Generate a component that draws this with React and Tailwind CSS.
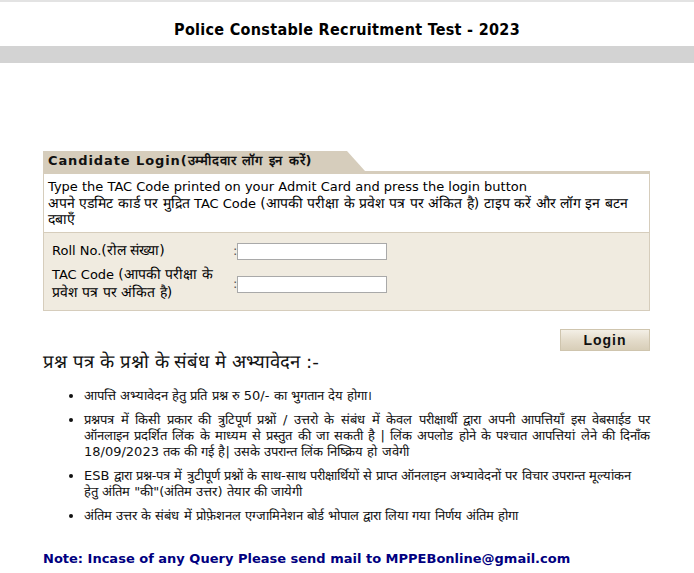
const HI = "text-[14px] leading-[1]";

export default function App() {
  return (
    <div className="w-[694px] min-h-[573px] bg-white font-['DejaVu_Sans',sans-serif] text-black">
      {/* top strip */}
      <div className="h-[2px] bg-[#e3e3e3]" />
      <div className="h-[44px] flex items-center justify-center pt-[12px]">
        <h1 className="font-['DejaVu_Sans_Condensed',sans-serif] font-bold text-[16px] tracking-[0.3px]">
          Police Constable Recruitment Test - 2023
        </h1>
      </div>
      <div className="h-[17px] bg-[#d3d3d3]" />

      <div className="mx-[43px] mt-[88px] w-[607px]">
        {/* tab header */}
        <div className="flex h-[20px]">
          <div className="bg-[#d6cdbc] h-full w-[304px] flex items-center pl-[5px] font-bold text-[13px] tracking-[0.9px] text-[#111]">
            Candidate Login(उम्मीदवार लॉग इन करें)
          </div>
          <svg width="18" height="20" viewBox="0 0 18 20" className="block">
            <polygon points="0,0 0,20 18,20" fill="#d6cdbc" />
          </svg>
        </div>
        <div className="border border-[#d6cdbc] border-t-[3px]">
          <div className="bg-white px-[4px] pt-[5px] text-[13px] leading-[16.5px] h-[58px]">
            <p>Type the TAC Code printed on your Admit Card and press the login button</p>
            <p>
              <span className={HI}>अपने एडमिट कार्ड पर मुद्रित</span> TAC Code{" "}
              <span className={HI}>(आपकी परीक्षा के प्रवेश पत्र पर अंकित है) टाइप करें और लॉग इन बटन दबाएँ</span>
            </p>
          </div>
          <div className="border-t border-[#d6cdbc] bg-[#f0ebe0] px-[8px] pt-[7px] pb-[8px] text-[13px] leading-[18px]">
            <div className="flex items-center h-[22px]">
              <span className="w-[180px]">
                Roll No.<span className={HI}>(रोल संख्या)</span>
              </span>
              <span className="w-[4px] ml-[1px] text-[#555]">:</span>
              <input className="w-[150px] h-[17px] bg-white border border-[#a9a9a9] outline-none" />
            </div>
            <div className="flex items-center mt-[4px]">
              <span className="w-[180px] leading-[18px]">
                TAC Code <span className={HI}>(आपकी परीक्षा के प्रवेश पत्र पर अंकित है)</span>
              </span>
              <span className="w-[4px] ml-[1px] text-[#555]">:</span>
              <input className="w-[150px] h-[17px] bg-white border border-[#a9a9a9] outline-none" />
            </div>
          </div>
        </div>

        <div className="flex justify-end mt-[18px]">
          <button className="w-[90px] h-[22px] border border-[#cfc5ae] bg-[linear-gradient(to_bottom,#f3efe6,#e4dccb_50%,#d8ceb8)] font-['Liberation_Sans',sans-serif] font-bold text-[14px] tracking-[1px] text-[#111] flex items-center justify-center">
            Login
          </button>
        </div>

        <h2 className="mt-[0px] text-[18.5px] leading-[22px] text-[#111]">
          प्रश्न पत्र के प्रश्नो के संबंध मे अभ्यावेदन :-
        </h2>

        <ul className="list-disc pl-[41px] mt-[15px] text-[13px] leading-[16px] text-justify text-[#111] flex flex-col gap-[8px]">
          <li>आपत्ति अभ्यावेदन हेतु प्रति प्रश्न रु 50/- का भुगतान देय होगा।</li>
          <li>
            प्रश्नपत्र में किसी प्रकार की त्रुटिपूर्ण प्रश्नों / उत्तरो के संबंध में केवल परीक्षार्थी द्वारा अपनी आपत्तियाँ इस वेबसाईड पर ऑनलाइन प्रदर्शित लिंक के माध्यम से प्रस्तुत की जा सकती है | लिंक अपलोड होने के पश्चात आपत्तियां लेने की दिनाँक 18/09/2023 तक की गई है| उसके उपरान्त लिंक निष्क्रिय हो जवेगी
          </li>
          <li>
            ESB द्वारा प्रश्न-पत्र में त्रुटीपूर्ण प्रश्नों के साथ-साथ परीक्षार्थियों से प्राप्त ऑनलाइन अभ्यावेदनों पर विचार उपरान्त मूल्यांकन<br />हेतु अंतिम "की"(अंतिम उत्तर) तेयार की जायेगी
          </li>
          <li>अंतिम उत्तर के संबंध में प्रोफ़ेशनल एग्जामिनेशन बोर्ड भोपाल द्वारा लिया गया निर्णय अंतिम होगा</li>
        </ul>

        <p className="mt-[25px] font-bold text-[13px] text-[#000080]">
          Note: Incase of any Query Please send mail to MPPEBonline@gmail.com
        </p>
      </div>
    </div>
  );
}
